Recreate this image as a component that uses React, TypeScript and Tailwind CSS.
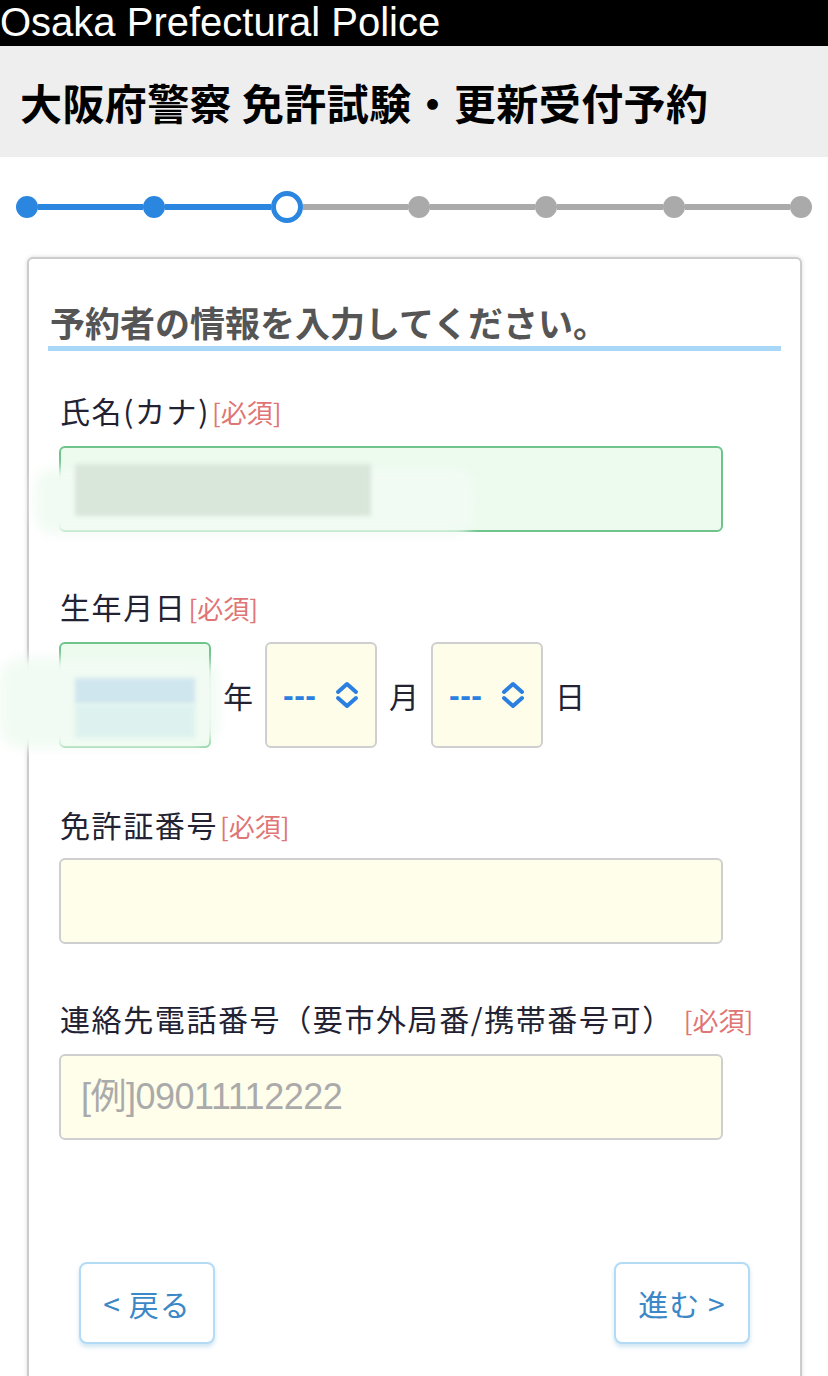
import { ReactNode } from 'react';

const jp = "font-['Noto_Sans_CJK_JP','Noto_Sans',sans-serif]";

// Up/down chevron used by the select boxes
function UpDown() {
	return (
		<svg width="26" height="30" viewBox="0 0 26 30" fill="none">
			<path d="M4 12 L13 4 L22 12" stroke="#2a7fe0" strokeWidth="4" strokeLinecap="round" strokeLinejoin="round" />
			<path d="M4 18 L13 26 L22 18" stroke="#2a7fe0" strokeWidth="4" strokeLinecap="round" strokeLinejoin="round" />
		</svg>
	);
}

function Label({ children, className = '' }: { children: ReactNode; className?: string }) {
	return (
		<div className={`ml-[31px] text-[30px] leading-[40px] tracking-[1.6px] text-[#222233] ${className}`}>
			{children}
			<span className="ml-[2px] text-[26px] tracking-normal text-[#e07575]">[必須]</span>
		</div>
	);
}

function SelectBox() {
	return (
		<div className="w-[112px] h-[106px] rounded-[6px] border-2 border-[#cfcfcf] bg-[#fdfdea] flex items-center pl-[16px] gap-[18px]">
			<span className="text-[32px] leading-none font-bold text-[#2a7fe0] font-['Liberation_Sans',sans-serif] tracking-[0.5px]">---</span>
			<UpDown />
		</div>
	);
}

const steps = ['done', 'done', 'current', 'todo', 'todo', 'todo', 'todo'];

export default function App() {
	return (
		<div className={`w-[828px] h-[1376px] overflow-hidden bg-white ${jp}`}>
			{/* Top black bar */}
			<div className="h-[46px] bg-black text-white font-['Liberation_Sans',sans-serif] text-[40px] leading-[44px] whitespace-nowrap">
				Osaka Prefectural Police
			</div>

			{/* Title band */}
			<div className="h-[111px] bg-[#eeeeee] flex items-center pl-[20px]">
				<h1 className="text-[42px] font-bold text-black leading-none tracking-[0.4px]">大阪府警察 免許試験・更新受付予約</h1>
			</div>

			{/* Progress stepper */}
			<div className="h-[100px] px-[16px] flex items-center">
				{steps.map((s, i) => (
					<div key={i} className="contents">
						{i > 0 && <div className={`flex-1 h-[6px] ${s === 'todo' ? 'bg-[#aaaaaa]' : 'bg-[#2b86e0]'}`} />}
						{s === 'current' ? (
							<div className="w-[32px] h-[32px] rounded-full border-[5px] border-[#2b86e0] bg-white shrink-0" />
						) : (
							<div className={`w-[22px] h-[22px] rounded-full shrink-0 ${s === 'done' ? 'bg-[#2b86e0]' : 'bg-[#aaaaaa]'}`} />
						)}
					</div>
				))}
			</div>

			{/* Form card */}
			<div className="ml-[27px] w-[775px] h-[1200px] rounded-[6px] border-2 border-[#cccccc] shadow-[0_0_4px_rgba(0,0,0,0.15)] bg-white">
				<div className="mt-[41px] mx-[19px] pl-[2px] pb-[2px] border-b-[5px] border-[#a9d7f8]">
					<h2 className="text-[35px] font-bold leading-[44px] text-[#555555]">予約者の情報を入力してください。</h2>
				</div>

				<Label className="mt-[39px]">氏名(カナ)</Label>
				<div className="relative mt-[14px] ml-[30px] w-[664px] h-[86px] rounded-[6px] border-2 border-[#6fc48c] bg-[#ecfbee]">
					<div className="absolute left-[-26px] top-[20px] w-[440px] h-[66px] rounded-[20px] bg-[#f1fbf3] blur-[6px]" />
					<div className="absolute left-[14px] top-[16px] w-[296px] h-[52px] bg-[#d9e6da] blur-[2px]" />
				</div>

				<Label className="mt-[54px]">生年月日</Label>
				<div className="mt-[14px] ml-[30px] flex items-center">
					<div className="relative w-[152px] h-[106px] rounded-[6px] border-2 border-[#6fc48c] bg-[#ecfbee]">
						<div className="absolute left-[-62px] top-[14px] w-[220px] h-[90px] rounded-[24px] bg-[#f1fbf3] blur-[6px]" />
						<div className="absolute left-[14px] top-[34px] w-[120px] h-[26px] bg-[#cfe6ee] blur-[2px]" />
						<div className="absolute left-[14px] top-[60px] w-[120px] h-[34px] bg-[#ddf2ee] blur-[2px]" />
					</div>
					<span className="mx-[12px] text-[30px] text-[#222233]">年</span>
					<SelectBox />
					<span className="mx-[12px] text-[30px] text-[#222233]">月</span>
					<SelectBox />
					<span className="mx-[12px] text-[30px] text-[#222233]">日</span>
				</div>

				<Label className="mt-[56px]">免許証番号</Label>
				<div className="mt-[12px] ml-[30px] w-[664px] h-[86px] rounded-[6px] border-2 border-[#cfcfcf] bg-[#fefeea]" />

				<Label className="mt-[54px]">
					連絡先電話番号（要市外局番/携帯番号可）<span className="inline-block w-[8px]" />
				</Label>
				<div className="mt-[14px] ml-[30px] w-[664px] h-[86px] rounded-[6px] border-2 border-[#cfcfcf] bg-[#fefeea] flex items-center pl-[20px]">
					<span className="text-[36px] text-[#aaaaaa] font-['Liberation_Sans','Noto_Sans_CJK_JP',sans-serif] tracking-[-0.5px]">[例]09011112222</span>
				</div>

				{/* Nav buttons */}
				<div className="mt-[122px] mx-[50px] flex justify-between">
					<button className="w-[136px] h-[82px] rounded-[8px] border-2 border-[#b3dbf6] bg-white shadow-[0_3px_4px_rgba(120,180,220,0.35)] text-[30px] text-[#3c88c6] tracking-[1px]">
						&lt; 戻る
					</button>
					<button className="w-[136px] h-[82px] rounded-[8px] border-2 border-[#b3dbf6] bg-white shadow-[0_3px_4px_rgba(120,180,220,0.35)] text-[30px] text-[#3c88c6] tracking-[1px]">
						進む &gt;
					</button>
				</div>
			</div>
		</div>
	);
}
